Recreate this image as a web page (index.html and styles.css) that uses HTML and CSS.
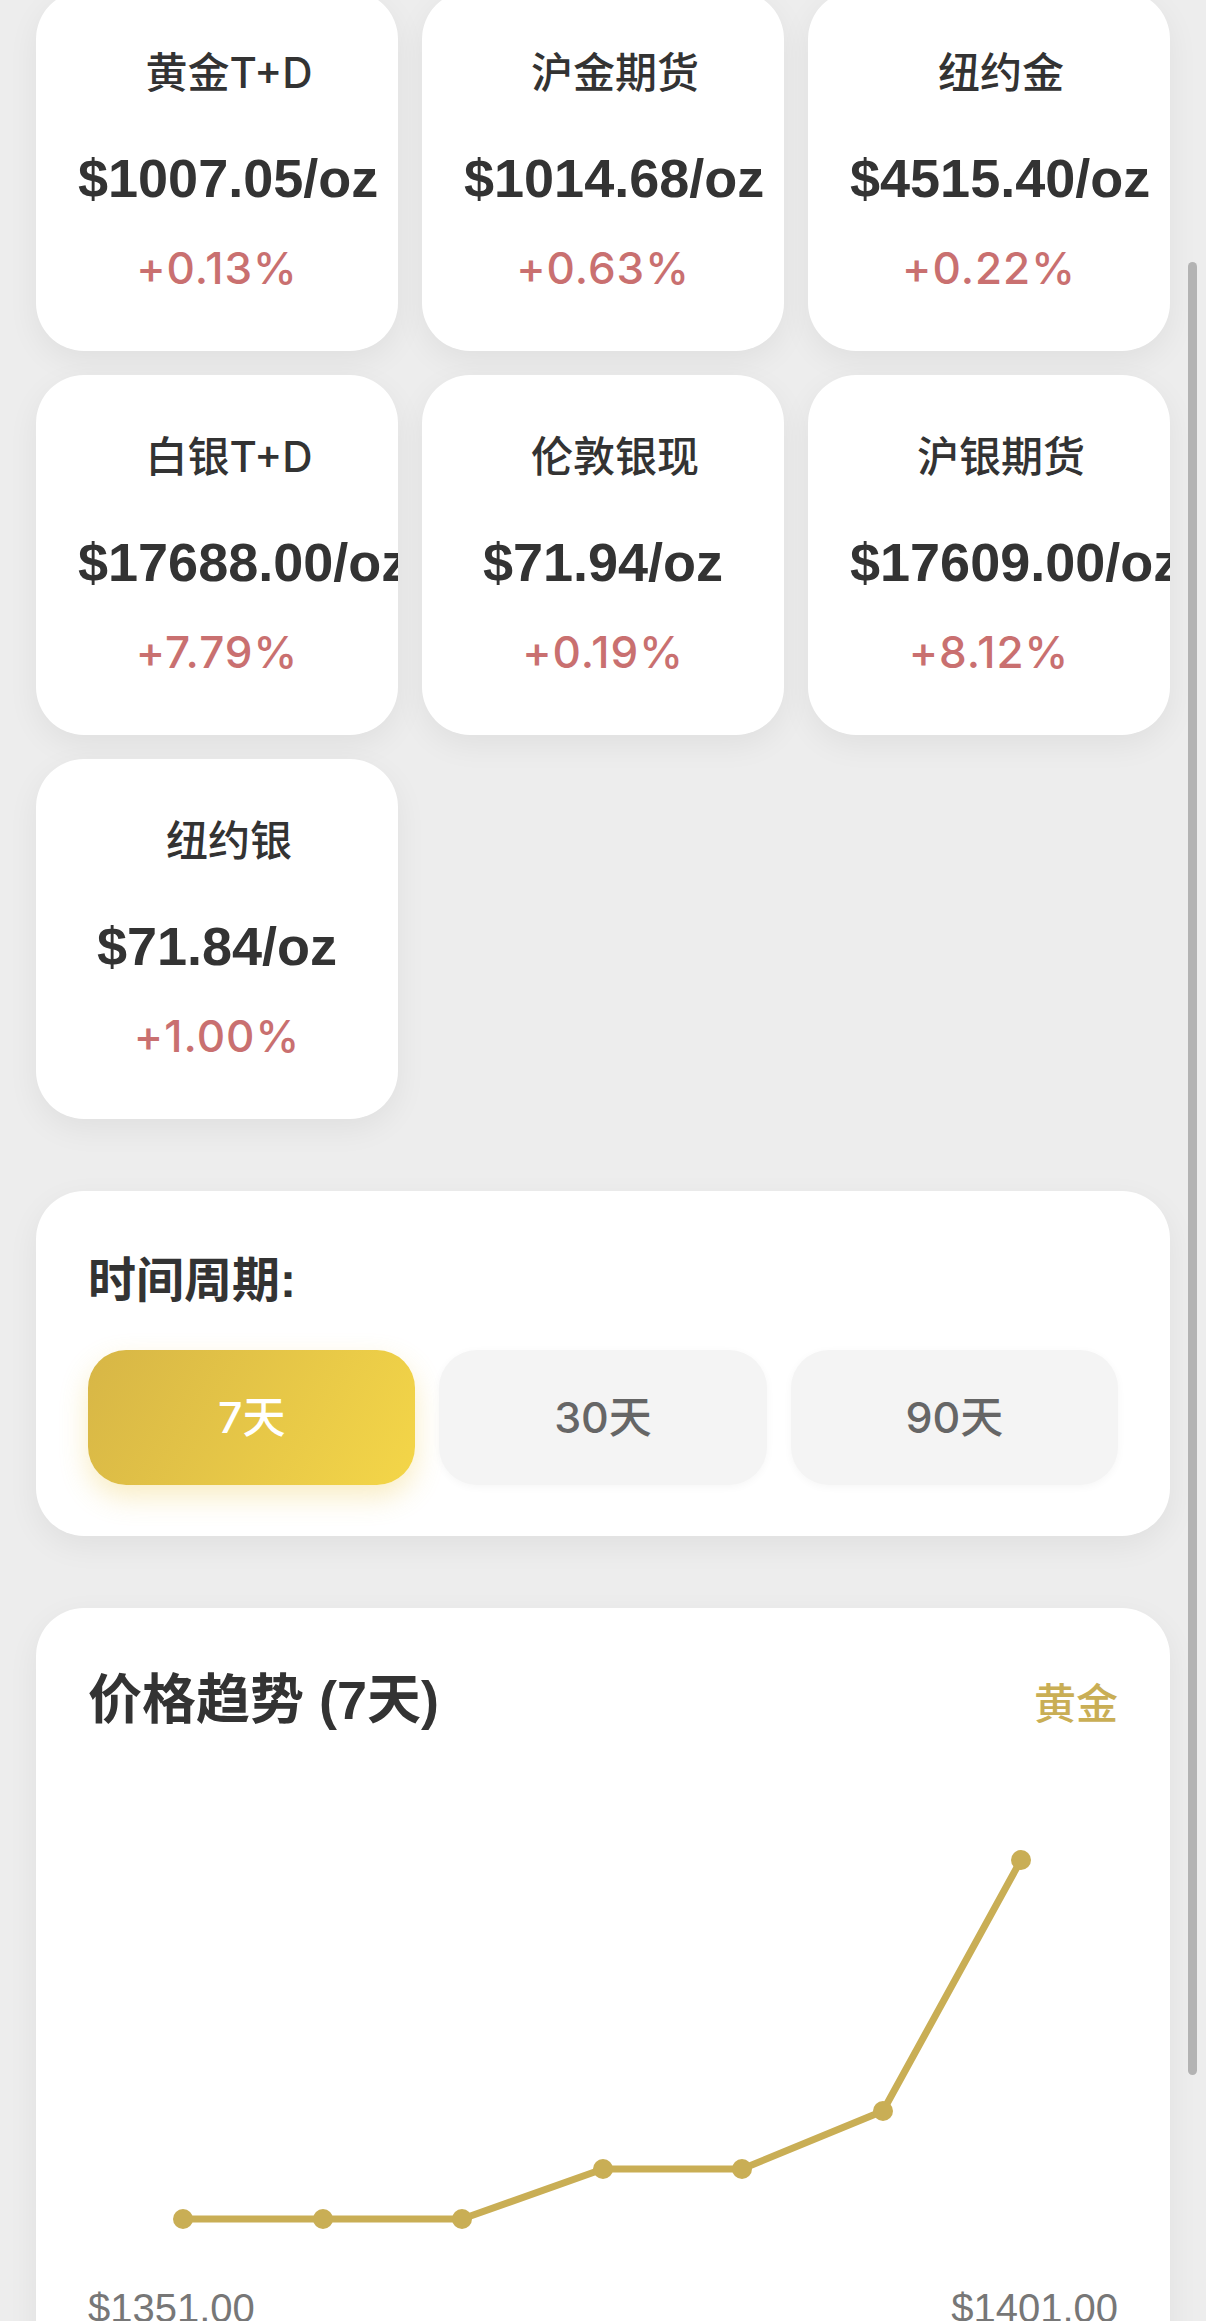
FILE: index.html
```html
<!DOCTYPE html>
<html lang="zh-CN">
<head>
  <meta charset="UTF-8" />
  <meta name="viewport" content="width=device-width, initial-scale=1.0"/>
  <title>贵金属行情</title>
  <link rel="stylesheet" href="styles.css">
</head>
<body>

  <div class="page">

    <!-- Quotes -->
    <div class="quote-grid">
      <div class="quote-card">
        <div class="quote-name">黄金T+D</div>
        <div class="quote-price">$1007.05/oz</div>
        <div class="quote-change">+0.13%</div>
      </div>
      <div class="quote-card">
        <div class="quote-name">沪金期货</div>
        <div class="quote-price">$1014.68/oz</div>
        <div class="quote-change">+0.63%</div>
      </div>
      <div class="quote-card">
        <div class="quote-name">纽约金</div>
        <div class="quote-price">$4515.40/oz</div>
        <div class="quote-change">+0.22%</div>
      </div>
      <div class="quote-card">
        <div class="quote-name">白银T+D</div>
        <div class="quote-price">$17688.00/oz</div>
        <div class="quote-change">+7.79%</div>
      </div>
      <div class="quote-card">
        <div class="quote-name">伦敦银现</div>
        <div class="quote-price">$71.94/oz</div>
        <div class="quote-change">+0.19%</div>
      </div>
      <div class="quote-card">
        <div class="quote-name">沪银期货</div>
        <div class="quote-price">$17609.00/oz</div>
        <div class="quote-change">+8.12%</div>
      </div>
      <div class="quote-card">
        <div class="quote-name">纽约银</div>
        <div class="quote-price">$71.84/oz</div>
        <div class="quote-change">+1.00%</div>
      </div>
    </div>

    <!-- Period -->
    <div class="panel period-panel">
      <div class="panel-title">时间周期:</div>
      <div class="period-options">
        <div class="period-btn active">7天</div>
        <div class="period-btn">30天</div>
        <div class="period-btn">90天</div>
      </div>
    </div>

    <!-- Chart -->
    <div class="panel chart-panel">
      <div class="chart-head">
        <div class="chart-title">价格趋势 (7天)</div>
        <div class="chart-tag">黄金</div>
      </div>
      <svg class="chart-svg" viewBox="0 0 1030 500" width="1030" height="500">
        <polyline points="95,439 235,439 374,439 515,389 654,389 795,331 933,80"
                  fill="none" stroke="#c9ae55" stroke-width="7" stroke-linejoin="round"/>
        <g fill="#c9ae55">
          <circle cx="95" cy="439" r="10"/>
          <circle cx="235" cy="439" r="10"/>
          <circle cx="374" cy="439" r="10"/>
          <circle cx="515" cy="389" r="10"/>
          <circle cx="654" cy="389" r="10"/>
          <circle cx="795" cy="331" r="10"/>
          <circle cx="933" cy="80" r="10"/>
        </g>
      </svg>
      <div class="chart-labels">
        <span>$1351.00</span>
        <span>$1401.00</span>
      </div>
    </div>

  </div>

  <div class="scroll-thumb"></div>

</body>
</html>
```

FILE: styles.css
```css
html, body {
  margin: 0;
  height: 2321px;
  overflow: hidden;
}

body {
  font-family: "Liberation Sans", "Noto Sans CJK SC", sans-serif;
  background-color: #ededed;
  color: #333;
}

.page {
  padding: 0 36px;
}

/* quote cards */
.quote-grid {
  display: grid;
  grid-template-columns: repeat(3, 1fr);
  gap: 24px;
  margin-top: -9px;
}

.quote-card {
  background: #fff;
  border-radius: 48px;
  padding: 52px 42px 55px;
  height: 360px;
  box-sizing: border-box;
  text-align: center;
  overflow: hidden;
  white-space: nowrap;
  box-shadow: 0 10px 32px rgba(0, 0, 0, 0.06);
}

.quote-name {
  font-family: "Inter", "Noto Sans CJK SC", sans-serif;
  font-size: 42px;
  line-height: 60px;
  font-weight: 500;
  padding-left: 24px;
}

.quote-price {
  font-size: 54px;
  line-height: 70px;
  font-weight: bold;
  margin-top: 40px;
}

.quote-change {
  font-family: "Inter", sans-serif;
  font-size: 44px;
  line-height: 56px;
  font-weight: 500;
  margin-top: 27px;
  color: #c97070;
  letter-spacing: 1px;
}

/* panels */
.panel {
  background: #fff;
  border-radius: 48px;
  padding: 52px;
  margin-top: 72px;
  box-shadow: 0 10px 32px rgba(0, 0, 0, 0.06);
}

.period-panel {
  padding-bottom: 51px;
}

.panel-title {
  font-size: 48px;
  line-height: 76px;
  font-weight: bold;
}

.period-options {
  display: grid;
  grid-template-columns: repeat(3, 1fr);
  gap: 24px;
  margin-top: 31px;
}

.period-btn {
  font-family: "Inter", "Noto Sans CJK SC", sans-serif;
  height: 135px;
  line-height: 135px;
  text-align: center;
  border-radius: 38px;
  background: #f4f4f4;
  color: #666;
  font-size: 43px;
  font-weight: 500;
  box-shadow: 0 2px 8px rgba(0, 0, 0, 0.04);
}

.period-btn.active {
  background: linear-gradient(120deg, #d7b646, #f4d648);
  color: #fff;
  box-shadow: 0 12px 28px rgba(235, 195, 60, 0.3);
}

/* chart */
.chart-panel {
  height: 900px;
}

.chart-head {
  display: flex;
  justify-content: space-between;
  align-items: center;
}

.chart-title {
  font-size: 54px;
  line-height: 80px;
  font-weight: bold;
}

.chart-tag {
  font-size: 42px;
  font-weight: 500;
  color: #c9ae55;
}

.chart-svg {
  display: block;
  margin-top: 40px;
}

.chart-labels {
  display: flex;
  justify-content: space-between;
  font-size: 40px;
  line-height: 56px;
  color: #777;
}

.scroll-thumb {
  position: fixed;
  top: 262px;
  right: 9px;
  width: 9px;
  height: 1813px;
  border-radius: 5px;
  background: #b3b3b3;
}
```
